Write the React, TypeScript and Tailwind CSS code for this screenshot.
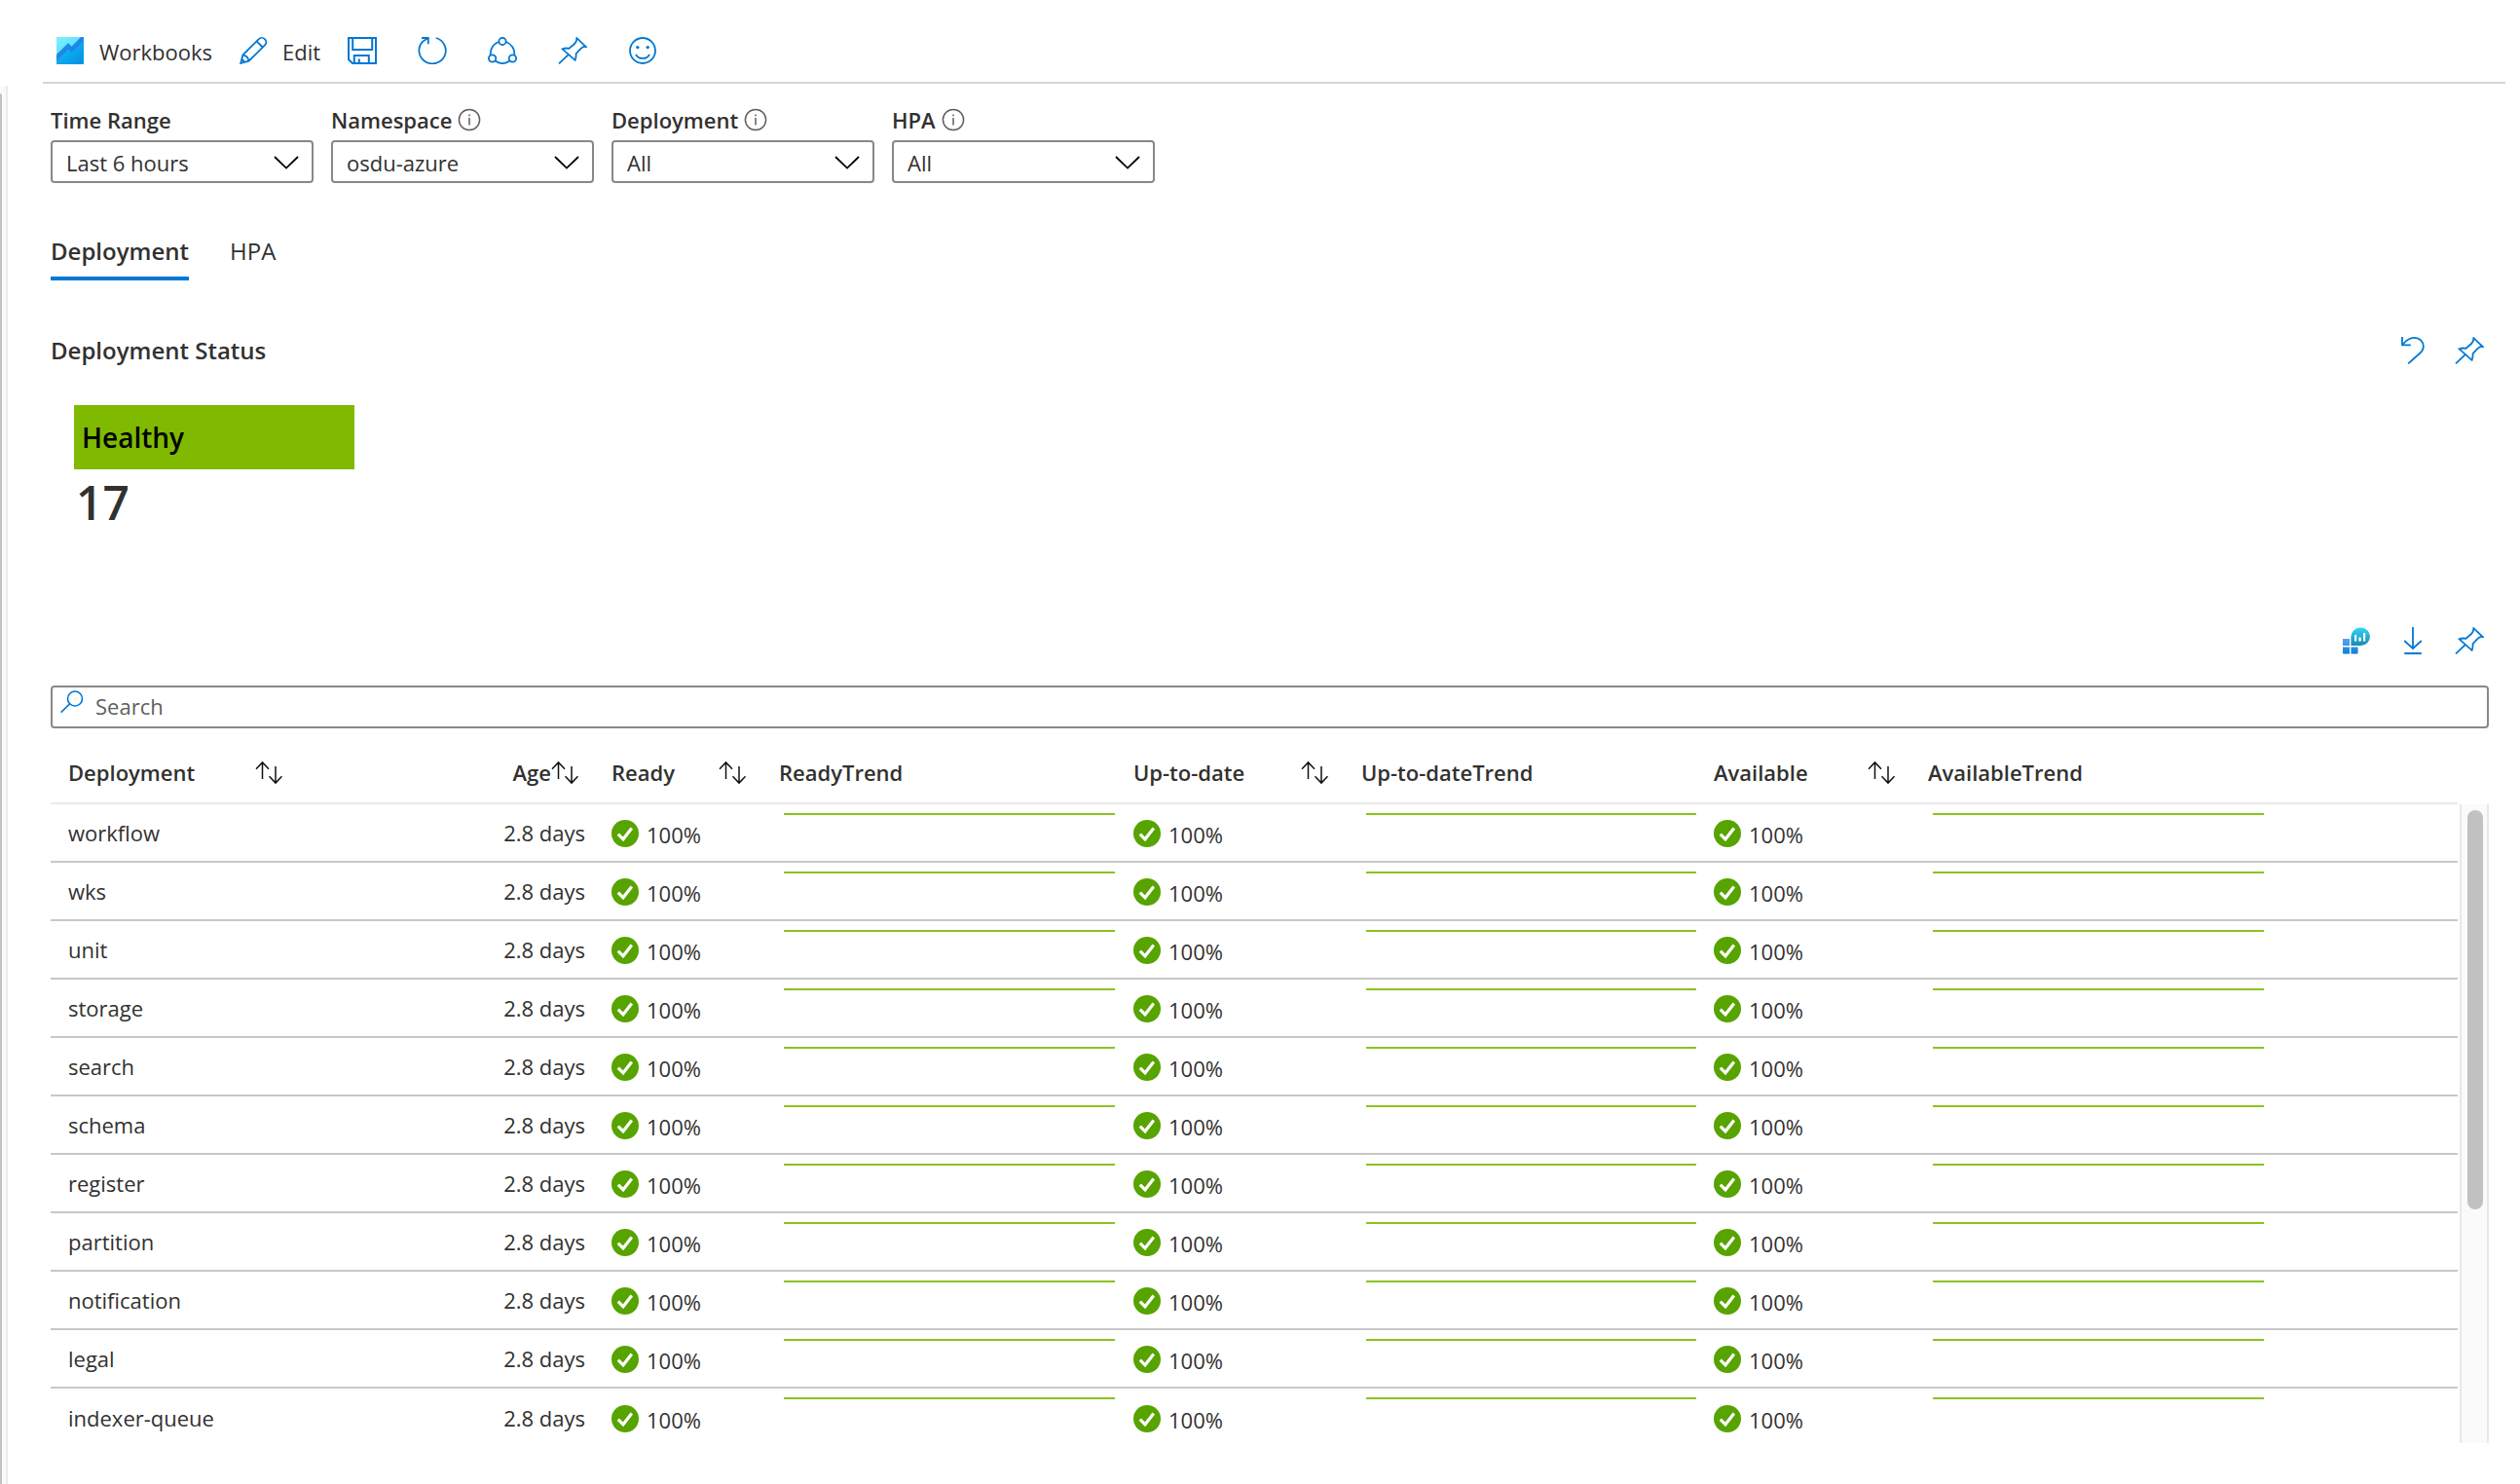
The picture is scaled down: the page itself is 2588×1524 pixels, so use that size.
import React, { useState } from "react";

const names = [
  "workflow", "wks", "unit", "storage", "search", "schema",
  "register", "partition", "notification", "legal", "indexer-queue",
];

const filters = [
  { id: "time-range", label: "Time Range", value: "Last 6 hours", info: false },
  { id: "namespace", label: "Namespace", value: "osdu-azure", info: true },
  { id: "deployment", label: "Deployment", value: "All", info: true },
  { id: "hpa", label: "HPA", value: "All", info: true },
];

const columns = [
  { title: "Deployment", sort: true, width: "w-[254px]" },
  { title: "Age", sort: true, width: "w-[304px]", right: true },
  { title: "Ready", sort: true, width: "w-[172px]" },
  { title: "ReadyTrend", sort: false, width: "w-[364px]" },
  { title: "Up-to-date", sort: true, width: "w-[234px]" },
  { title: "Up-to-dateTrend", sort: false, width: "w-[362px]" },
  { title: "Available", sort: true, width: "w-[220px]" },
  { title: "AvailableTrend", sort: false, width: "w-auto" },
];

function LineIcon({ w, children }: { w: number; children: React.ReactNode }) {
  return (
    <svg width={w} height={28} viewBox={`0 0 ${w} 28`} fill="none" stroke="#0078d4" strokeWidth={1.8} aria-hidden="true">
      {children}
    </svg>
  );
}

const PinIcon = () => (
  <LineIcon w={30}>
    <path d="M1 27.3 11.3 17.6M19.4 1.2 28.8 10Q25.5 9.6 23.5 12L18.6 17Q18.8 21 17.6 23.8L4.6 12.3Q8 11 11.5 11.8L17 7Q19.4 4.6 19.4 1.2z" />
  </LineIcon>
);

const PencilIcon = () => (
  <LineIcon w={28}>
    <path d="M1.2 26.9 3.4 18.4 19.8 2.2A4.3 4.3 0 0 1 26 8.3L9.6 24.7zM3.4 18.4Q8.6 19.4 9.6 24.7M17.6 4.4 23.8 10.5M1.2 26.9 5.4 25.8 2.3 22.6z" />
  </LineIcon>
);

const SaveIcon = () => (
  <LineIcon w={30}>
    <path d="M1 1H29V27H5L1 23zM5.2 1V13H25.2V1M6.8 27V19H21.8V27M11.8 27V22.4" strokeWidth={2} />
  </LineIcon>
);

const RefreshIcon = () => (
  <LineIcon w={30}>
    <path d="M18.8 1A13.7 13.4 0 1 1 5.2 4.6L10.8 1M4 1H10.8V7.2" />
  </LineIcon>
);

const ShareIcon = () => (
  <LineIcon w={30}>
    <circle cx="15" cy="4.4" r="3.6" />
    <circle cx="4.6" cy="22" r="3.7" />
    <circle cx="25.4" cy="22" r="3.7" />
    <path d="M11.4 5A12.6 12.6 0 0 0 2.8 18.6M18.6 5A12.6 12.6 0 0 1 27.2 18.6M7.5 24.6Q15 29.6 22.5 24.6" />
  </LineIcon>
);

const SmileIcon = () => (
  <LineIcon w={28}>
    <circle cx="14" cy="14" r="13" />
    <path d="M7 17.8C9.4 23.3 18.6 23.3 21 17.8" />
    <circle cx="8.8" cy="10.6" r="1.7" fill="#0078d4" stroke="none" />
    <circle cx="19.2" cy="10.6" r="1.7" fill="#0078d4" stroke="none" />
  </LineIcon>
);

const UndoIcon = () => (
  <LineIcon w={24}>
    <path d="M1 0V8.4H9.8M1.2 8.2C7 1 11 .9 13 .9C19.5 .9 22.8 5.2 22.8 9.6C22.8 12.2 21.8 14.4 20 16L7.2 27.4" />
  </LineIcon>
);

const DownloadIcon = () => (
  <LineIcon w={20}>
    <path d="M10 0V21.6M1.2 14 10 22 18.8 14M1.2 27H18.8" />
  </LineIcon>
);

const WorkbookIcon = () => (
  <svg width={28} height={28} viewBox="0 0 28 28" aria-hidden="true">
    <defs>
      <linearGradient id="wbTop" x1="0" y1="0" x2="0.6" y2="0.8">
        <stop offset="0" stopColor="#7df1ff" />
        <stop offset="1" stopColor="#4fd9f8" />
      </linearGradient>
      <linearGradient id="wbLow" x1="0" y1="0.2" x2="0.7" y2="1">
        <stop offset="0" stopColor="#10c3f4" />
        <stop offset="1" stopColor="#0795e6" />
      </linearGradient>
    </defs>
    <rect width="28" height="28" rx="1" fill="url(#wbTop)" />
    <path d="M0 22 12 11 15.5 14.5 28 2V27a1 1 0 0 1-1 1H1a1 1 0 0 1-1-1z" fill="url(#wbLow)" />
    <path d="M0 18 12 6.2 15.5 9.7 25.2 0H27a1 1 0 0 1 1 1V4L15.5 16 12.2 12.8 0 24.6z" fill="#1f87e5" />
  </svg>
);

const MetricsIcon = () => (
  <svg width={28} height={28} viewBox="0 0 28 28" aria-hidden="true">
    <defs>
      <linearGradient id="mBubble" x1="0" y1="0" x2="0" y2="1">
        <stop offset="0" stopColor="#32d4f5" />
        <stop offset="1" stopColor="#198ab3" />
      </linearGradient>
      <linearGradient id="mTile" x1="0" y1="0" x2="0" y2="1">
        <stop offset="0" stopColor="#5ea0ef" />
        <stop offset="1" stopColor="#0f7fd8" />
      </linearGradient>
    </defs>
    <path d="M0 12H7V19H0zM0 20.4H7V27.4H1a1 1 0 0 1-1-1zM8.4 20.4H15.6V26.4a1 1 0 0 1-1 1H8.4z" fill="url(#mTile)" />
    <path d="M8.4 19V9.6A9.6 9.3 0 0 1 18 .6H18.6A9.4 9.2 0 0 1 18.6 19z" fill="url(#mBubble)" />
    <path d="M12 8h2.2v6.6H12zM16.4 10.4h2.4v4.2h-2.4zM21 6h2.2v8.6H21z" fill="#fff" />
  </svg>
);

const SortIcon = () => (
  <svg width={28} height={26} viewBox="0 0 28 26" fill="none" stroke="#111" strokeWidth={1.5} className="shrink-0" aria-hidden="true">
    <path d="M7.5 20V3M1 9.7 7.5 2.9 14 9.7M21 7V24M14.5 17.3 21 24.1 27.5 17.3" />
  </svg>
);

const InfoIcon = () => (
  <svg width={24} height={24} viewBox="0 0 24 24" fill="none" stroke="#605e5c" strokeWidth={1.5} aria-hidden="true">
    <circle cx="12" cy="12" r="10.6" />
    <path d="M12 10V17.5M12 6.4V8.2" />
  </svg>
);

const CheckIcon = () => (
  <svg width={28} height={28} viewBox="0 0 28 28" aria-hidden="true">
    <circle cx="14" cy="14" r="14" fill="#57a300" />
    <path d="M6.8 14.6 12 19.8 20.8 8.6" fill="none" stroke="#fff" strokeWidth="3.2" />
  </svg>
);

const IconButton = ({ label, children }: { label: string; children: React.ReactNode }) => (
  <button type="button" aria-label={label} className="flex h-7 w-[30px] items-center justify-center">
    {children}
  </button>
);

const Status = () => (
  <td className="pt-0.5 pl-[18px]">
    <div className="flex items-center gap-2">
      <CheckIcon />
      <span className="pt-0.5">100%</span>
    </div>
  </td>
);

const Trend = () => (
  <td className="pt-[9px] pl-[23px] align-top">
    <div className="h-0.5 w-full max-w-[340px] bg-[#8cc220]" />
  </td>
);

export default function App() {
  const [tab, setTab] = useState("Deployment");
  return (
    <div className="min-h-screen bg-white font-['Open_Sans','Noto_Sans',sans-serif] text-[22px] leading-8 text-[#323130]">
      <header className="mr-[15px] ml-11 flex h-[86px] items-center gap-[42px] border-b-2 border-[#d6d6d6] pt-5 pl-3.5">
        <div className="flex items-center gap-7">
          <button type="button" className="flex items-center gap-4">
            <WorkbookIcon />
            <span className="pt-0.5">Workbooks</span>
          </button>
          <button type="button" className="flex items-center gap-4">
            <PencilIcon />
            <span className="pt-0.5">Edit</span>
          </button>
          <IconButton label="Save"><SaveIcon /></IconButton>
        </div>
        <IconButton label="Refresh"><RefreshIcon /></IconButton>
        <IconButton label="Share"><ShareIcon /></IconButton>
        <IconButton label="Pin"><PinIcon /></IconButton>
        <IconButton label="Feedback"><SmileIcon /></IconButton>
      </header>

      <div className="flex">
        <div className="mt-0.5 flex w-2 shrink-0 border-r-2 border-[#ebebeb] bg-[#fafafa] pt-2">
          <div className="w-0.5 rounded-tr-sm bg-[#c1c1c1]" />
        </div>

        <main className="flex min-w-0 flex-1 flex-col pr-8 pb-[42px] pl-11">
          <div className="flex gap-[18px] pt-[21px]">
            {filters.map((f) => (
              <div key={f.id} className="flex w-[270px] flex-col gap-[5px]">
                <div className="flex items-center gap-1.5">
                  <label htmlFor={f.id} className="font-semibold">{f.label}</label>
                  {f.info && <InfoIcon />}
                </div>
                <div className="relative">
                  <select id={f.id} className="h-11 w-full appearance-none rounded border-2 border-[#8a8886] bg-white pt-0.5 pl-3.5">
                    <option>{f.value}</option>
                  </select>
                  <svg width={26} height={14} viewBox="0 0 26 14" fill="none" stroke="#000" strokeWidth={1.8} className="pointer-events-none absolute top-4 right-[15px]" aria-hidden="true">
                    <path d="M1 1 13 12.6 25 1" />
                  </svg>
                </div>
              </div>
            ))}
          </div>

          <div role="tablist" className="mt-[50px] flex gap-[42px]">
            {["Deployment", "HPA"].map((t) => (
              <button
                key={t}
                type="button"
                role="tab"
                aria-selected={tab === t}
                onClick={() => setTab(t)}
                className={
                  tab === t
                    ? "h-[50px] border-b-4 border-[#0078d4] pb-1.5 text-2xl font-semibold"
                    : "h-[50px] border-b-4 border-transparent pb-1.5 text-2xl"
                }
              >
                {t}
              </button>
            ))}
          </div>

          <div className="mt-14 flex items-center justify-between pr-[5px]">
            <h2 className="text-2xl font-semibold">Deployment Status</h2>
            <div className="flex gap-7">
              <IconButton label="Undo"><UndoIcon /></IconButton>
              <IconButton label="Pin status"><PinIcon /></IconButton>
            </div>
          </div>

          <div className="mt-10 ml-6 w-72">
            <div className="flex h-[66px] items-center bg-[#7fba00] pl-2 text-[28px] font-semibold text-black">Healthy</div>
            <div className="pt-1 pb-0.5 pl-0.5 text-5xl leading-[60px] font-semibold">17</div>
          </div>

          <div className="mt-24 flex justify-end gap-7 pr-[5px]">
            <IconButton label="Metrics"><MetricsIcon /></IconButton>
            <IconButton label="Download"><DownloadIcon /></IconButton>
            <IconButton label="Pin table"><PinIcon /></IconButton>
          </div>

          <div className="relative mt-8">
            <input
              type="search"
              aria-label="Search"
              placeholder="Search"
              className="h-11 w-full rounded border-2 border-[#8a8886] pb-0.5 pl-11 placeholder:text-[#605e5c]"
            />
            <svg width={24} height={24} viewBox="0 0 24 24" fill="none" stroke="#0078d4" strokeWidth={1.6} className="pointer-events-none absolute top-[5px] left-2.5" aria-hidden="true">
              <circle cx="15" cy="8.5" r="7.5" />
              <path d="M9.6 13.9 .6 22.6" />
            </svg>
          </div>

          <div className="flex h-[734px] gap-0.5 overflow-hidden">
            <table className="flex-1 table-fixed border-collapse self-start text-left">
              <colgroup>
                {columns.map((c) => <col key={c.title} className={c.width} />)}
              </colgroup>
              <thead>
                <tr className="h-[77px] border-b-2 border-[#eaeaea]">
                  {columns.map((c) => (
                    <th key={c.title} scope="col" className="pt-3.5 pr-4 pl-[18px] font-semibold">
                      {c.sort ? (
                        <button type="button" className={c.right ? "flex w-full items-center justify-end" : "flex w-full items-center justify-between"}>
                          {c.title}
                          <SortIcon />
                        </button>
                      ) : (
                        c.title
                      )}
                    </th>
                  ))}
                </tr>
              </thead>
              <tbody>
                {names.map((n) => (
                  <tr key={n} className="h-[60px] border-b-2 border-[#c8c8c8] last:border-0">
                    <td className="pl-[18px]">{n}</td>
                    <td className="pr-[9px] text-right">2.8 days</td>
                    <Status />
                    <Trend />
                    <Status />
                    <Trend />
                    <Status />
                    <Trend />
                  </tr>
                ))}
              </tbody>
            </table>
            <div className="mt-[78px] w-[30px] shrink-0 border-x-2 border-[#e8e8e8] bg-[#fafafa] px-1 pt-1.5">
              <div className="ml-0.5 h-[410px] w-4 rounded-full bg-[#c1c1c1]" />
            </div>
          </div>
        </main>
      </div>
    </div>
  );
}
